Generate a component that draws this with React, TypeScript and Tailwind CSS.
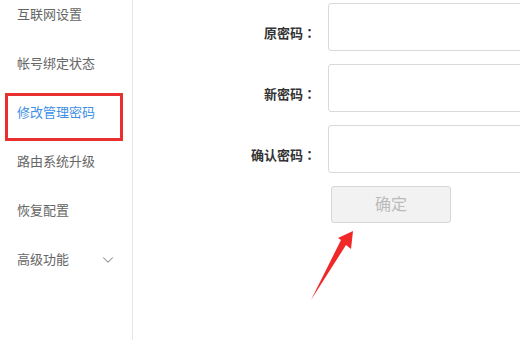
import { ChevronDown } from "lucide-react";

const menu = ["互联网设置", "帐号绑定状态", "修改管理密码", "路由系统升级", "恢复配置", "高级功能"];
const fields = ["原密码", "新密码", "确认密码"];

export default function App() {
  return (
    <div
      className="relative flex h-[340px] w-[520px] overflow-hidden bg-white"
      style={{ fontFamily: '"Liberation Sans", "Noto Sans CJK SC", sans-serif' }}
    >
      <aside className="w-[133px] shrink-0 border-r border-[#e6e6e6]">
        <ul className="mt-[-10px]">
          {menu.map((item, i) => (
            <li key={item} className="relative flex h-[49px] items-center px-[17px] text-[13px]">
              <span className={i === 2 ? "text-[#3d8fe6]" : "text-[#666]"}>{item}</span>
              {i === 5 && <ChevronDown className="ml-auto mr-[-2px] h-[18px] w-[18px] text-[#888]" strokeWidth={1.4} />}
              {i === 2 && (
                <div className="absolute left-[5px] top-[5px] h-[48px] w-[118px] border-[3px] border-[#e8302f]" />
              )}
            </li>
          ))}
        </ul>
      </aside>

      <main className="flex flex-1 flex-col gap-[13px] pt-[3px]">
        {fields.map((label) => (
          <div key={label} className="flex items-center">
            <label className="w-[183px] shrink-0 pt-[12px] text-right text-[13px] font-semibold text-[#333]">
              {label}
              <span style={{ fontFamily: '"Noto Sans CJK JP", sans-serif' }}>：</span>
            </label>
            <input className="ml-[12px] h-[48px] w-[220px] shrink-0 rounded-[3px] border border-[#d9d9d9] bg-white" />
          </div>
        ))}
        <div className="flex">
          <button className="ml-[198px] h-[37px] w-[120px] rounded-[3px] border border-[#d6d6d6] bg-[#f2f2f2] text-[16px] text-[#bbb]">
            确定
          </button>
        </div>
      </main>

      <svg className="pointer-events-none absolute left-0 top-0" width="520" height="340">
        <polygon points="353,231 351,249 346,245 311,300 341,240 338,238" fill="#f0282a" />
      </svg>
    </div>
  );
}
